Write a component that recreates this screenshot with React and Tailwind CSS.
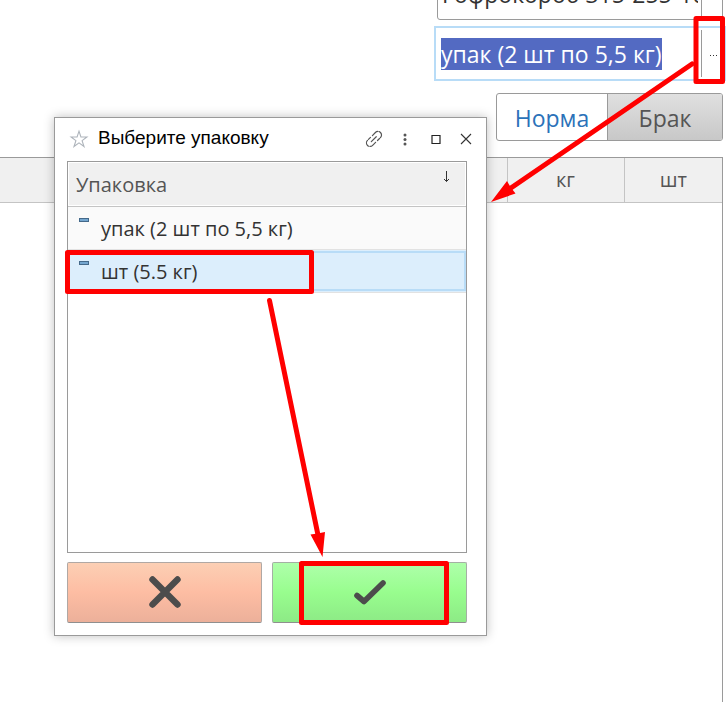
import React from "react";

const ui = "font-['Open_Sans','Noto_Sans',sans-serif]";

function PackageRow({ label, selected, onSelect }) {
  return (
    <tr className={selected ? "bg-[#dceefc]" : "bg-[#fafafa]"} onClick={onSelect}>
      <td className="h-[43px] border-b border-[#e2e2e2] p-0">
        <div className={selected ? "flex h-10 gap-3 border-2 border-[#b8dcf7] pl-[9px]" : "flex h-10 gap-3 border-2 border-transparent pl-[9px]"}>
          <span className="mt-2 h-1 w-2.5 shrink-0 border border-[#44698a] bg-[#74a6cf]" />
          <span className="text-[20px] leading-[38px] text-[#333]">{label}</span>
        </div>
      </td>
    </tr>
  );
}

function PackageDialog() {
  return (
    <section
      role="dialog"
      aria-label="Выберите упаковку"
      className="absolute right-[239px] top-[117px] flex h-[519px] w-[433px] flex-col border border-[#9a9a9a] bg-white pb-3 pl-3 pr-[19px] shadow-[0_0_10px_rgba(0,0,0,0.25)]"
    >
      <header className="-mr-2 flex h-[43px] shrink-0 items-center pb-0.5">
        <button aria-label="В избранное" className="ml-0.5">
          <svg width="20" height="20" viewBox="0 0 20 20" fill="none" stroke="#aeb4bb" strokeWidth="1.1">
            <path d="M10 2.2 11.900 8h6L13.100 11.600 15 17.500 10 13.900 5 17.500 6.900 11.600 2.100 8h6Z" />
          </svg>
        </button>
        <h1 className="ml-[9px] flex-1 font-['Liberation_Sans',Arial,sans-serif] text-[19px] text-black">Выберите упаковку</h1>
        <div className="flex items-center gap-3">
          <button aria-label="Скопировать ссылку">
            <svg width="18" height="18" viewBox="0 0 18 18" fill="none" stroke="#555" strokeWidth="1.2" strokeLinecap="round">
              <path d="m7.400 5.600 3-3.100a3.500 3.500 0 0 1 5.100 5l-3 3M10.600 12.300l-3 3.100a3.500 3.500 0 0 1-5.100-5l3-3M6.300 11.700l5.400-5.400" strokeDasharray="7 1.3" />
            </svg>
          </button>
          <button aria-label="Ещё">
            <svg width="20" height="20" viewBox="0 0 20 20" fill="#555">
              <circle cx="10" cy="6" r="1.5" />
              <circle cx="10" cy="10.500" r="1.5" />
              <circle cx="10" cy="15" r="1.5" />
            </svg>
          </button>
          <button aria-label="Развернуть">
            <svg width="18" height="18" viewBox="0 0 18 18" fill="none" stroke="#222" strokeWidth="1.2">
              <path d="M5 5.500h8v8h-8z" />
            </svg>
          </button>
          <button aria-label="Закрыть">
            <svg width="18" height="18" viewBox="0 0 18 18" fill="none" stroke="#333" strokeWidth="1.1">
              <path d="m4 4 10 10M14 4 4 14" />
            </svg>
          </button>
        </div>
      </header>

      <div className="flex-1 border border-[#9a9a9a]">
        <table className={`w-full border-collapse ${ui}`}>
          <thead>
            <tr>
              <th className="border-b border-[#c4c4c4] p-px text-left font-normal">
                <div className="flex h-[42px] justify-between bg-[#f0f0f0] pl-[7px] pr-3.5">
                  <span className="text-[20px] leading-[43px] text-[#555]">Упаковка</span>
                  <svg className="mt-2" width="9" height="12" viewBox="0 0 9 12" fill="none" stroke="#333">
                    <path d="M4.500 0v10.500M2 8l2.500 2.500L7 8" />
                  </svg>
                </div>
              </th>
            </tr>
          </thead>
          <tbody>
            <PackageRow label="упак (2 шт по 5,5 кг)" />
            <PackageRow label="шт (5.5 кг)" selected />
          </tbody>
        </table>
      </div>

      <footer className="mt-[9px] grid h-[61px] shrink-0 grid-cols-2 gap-2.5">
        <button aria-label="Отмена" className="flex items-center justify-center rounded-xs border border-[#b0a8a4] border-b-[#8f8f8f] bg-linear-to-b from-[#fccfb4] via-[#fdbda3] to-[#ecb09a]">
          <svg width="34" height="34" viewBox="0 0 34 34" stroke="#4c4c4c" strokeWidth="6.4" strokeLinecap="round">
            <path d="m4.500 3.500 25 25M29.500 3.500l-25 25" />
          </svg>
        </button>
        <button aria-label="Выбрать" className="flex items-center justify-center rounded-xs border border-[#a4b0a4] border-b-[#8f8f8f] bg-linear-to-b from-[#aeffaa] via-[#98fd8e] to-[#8dea86]">
          <svg width="34" height="28" viewBox="0 0 34 28" fill="none" stroke="#4c4c4c" strokeWidth="5.6" strokeLinecap="round" strokeLinejoin="round">
            <path d="m4 16.500 7 6L30 4" />
          </svg>
        </button>
      </footer>
    </section>
  );
}

function Annotations() {
  return (
    <svg className="pointer-events-none absolute right-0 top-0" width="726" height="702" viewBox="0 0 726 702" fill="none" stroke="#f00" strokeWidth="5" strokeLinejoin="round" strokeLinecap="round" aria-hidden="true">
      <path d="M696 18.500H722.500V81.500H696Z" />
      <path d="M67.500 252.500H311.500V291.500H67.500Z" />
      <path d="M301.500 563.500H446.500V622.500H301.500Z" />
      <path d="M692 64 508 190M269.500 300.500 318 535" />
      <path d="m491 202 16-21 3.500 6 5 6.500ZM322.500 557l-12-22.500 7-1 7.500-1.500Z" fill="#f00" stroke="none" />
    </svg>
  );
}

export default function App() {
  return (
    <main className={`relative flex min-h-screen flex-col overflow-hidden bg-white ${ui}`}>
      <div className="flex h-[93px] flex-col items-end gap-[6px] overflow-hidden">
        <div className="-mt-[34px] mr-[3px] flex h-[54px] w-[286px] shrink-0 rounded-[3px] border border-[#9a9a9a]">
          <div className="flex min-w-0 flex-1 border-r border-[#9a9a9a] pl-1 pr-[3px] pt-0.5">
            <input aria-label="Номенклатура" readOnly value="Гофрокороб 315-255-100" className="min-w-0 flex-1 text-[23px] text-[#333]" />
          </div>
          <span className="w-5" />
        </div>
        <div className="flex h-[55px] w-[292px] shrink-0 items-center border-2 border-[#b8dcf7]">
          <div className="flex-1 pl-[5px]">
            <input aria-label="Упаковка" readOnly value="упак (2 шт по 5,5 кг)" className="h-8 w-[221px] bg-[#536ac2] text-[23px] leading-8 text-white" />
          </div>
          <button aria-label="Выбрать упаковку" className="flex h-[47px] w-[23px] items-center justify-center border-l border-[#9a9a9a] pt-1">
            <svg width="9" height="2" viewBox="0 0 9 2" fill="#333">
              <path d="M1 0h1v1H1zM4 0h1v1H4zM7 0h1v1H7z" />
            </svg>
          </button>
        </div>
      </div>

      <div className="mr-[3px] flex h-12 w-[227px] shrink-0 self-end overflow-hidden rounded-[3px] border border-[#9a9a9a] text-[23px]">
        <button className="w-[111px] border-r border-[#9a9a9a] pt-0.5 text-[#2b72b9]">Норма</button>
        <button className="flex-1 bg-linear-to-b from-[#e0e0e0] to-[#c8c8c8] pt-0.5 text-[#555]">Брак</button>
      </div>

      <div className="mr-[3px] mt-4 flex-1 border-r border-t border-[#9a9a9a]">
        <table className="w-full table-fixed border-collapse">
          <thead>
            <tr className="h-11 border-b border-[#c4c4c4] bg-[#f0f0f0] text-[20px] text-[#555]">
              <th className="font-normal" aria-label="Товар" />
              <th className="w-[117px] border-l border-[#c4c4c4] font-normal">кг</th>
              <th className="w-[98px] border-l border-[#c4c4c4] font-normal">шт</th>
            </tr>
          </thead>
        </table>
      </div>

      <PackageDialog />
      <Annotations />
    </main>
  );
}
